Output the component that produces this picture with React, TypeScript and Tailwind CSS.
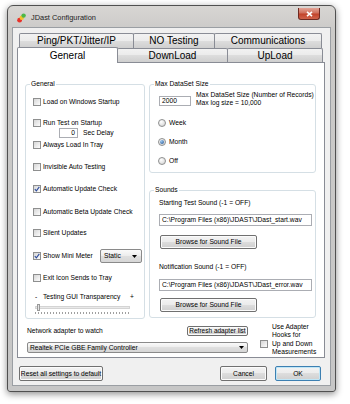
import type { ReactNode } from 'react';

function Check({ checked }: { checked?: boolean }) {
  return (
    <span className="w-[8px] h-[8px] shrink-0 border border-[#8e8f8f] bg-[linear-gradient(135deg,#d6d6d6,#fdfdfd)] flex items-center justify-center">
      {checked && (
        <svg width="6" height="6" viewBox="0 0 6 6">
          <path d="M0.8 3.1 L2.4 4.9 L5.3 0.9" fill="none" stroke="#2d4c9c" strokeWidth="1.1" />
        </svg>
      )}
    </span>
  );
}

function Radio({ on }: { on?: boolean }) {
  return (
    <span className="w-[8px] h-[8px] shrink-0 rounded-full border border-[#8e8f8f] bg-[radial-gradient(circle_at_35%_30%,#ffffff,#cfcfcf)] flex items-center justify-center">
      {on && <span className="w-[4px] h-[4px] rounded-full bg-[radial-gradient(circle_at_35%_30%,#9cc8f0,#1f4f8f)]" />}
    </span>
  );
}

function Btn({ children, className = '', ok }: { children: ReactNode; className?: string; ok?: boolean }) {
  return (
    <div
      className={`flex items-center justify-center whitespace-nowrap rounded-[2px] border bg-[linear-gradient(#f3f3f3,#ebebeb_50%,#dddddd_50%,#cfcfcf)] ${
        ok ? 'border-[#3c7fb1] shadow-[inset_0_0_0_1px_#bfe6f7]' : 'border-[#707070] shadow-[inset_0_0_0_1px_#fbfbfb]'
      } ${className}`}
    >
      {children}
    </div>
  );
}

function Arrow() {
  return (
    <svg width="5" height="3" viewBox="0 0 5 3" className="shrink-0">
      <polygon points="0,0 5,0 2.5,3" fill="#000" />
    </svg>
  );
}

function CheckRow({ label, checked, className = '' }: { label: string; checked?: boolean; className?: string }) {
  return (
    <div className={`flex items-center h-[10px] ${className}`}>
      <Check checked={checked} />
      <span className="ml-[2px] whitespace-nowrap">{label}</span>
    </div>
  );
}

function RadioRow({ label, on, className = '' }: { label: string; on?: boolean; className?: string }) {
  return (
    <div className={`flex items-center h-[10px] pl-[8px] ${className}`}>
      <Radio on={on} />
      <span className="ml-[3px]">{label}</span>
    </div>
  );
}

function Tab({ label, className = '' }: { label: string; className?: string }) {
  return (
    <div
      className={`flex items-center justify-center border border-b-0 border-[#898c95] rounded-t-[2px] bg-[linear-gradient(#f2f2f2,#ebebeb_50%,#dddddd_50%,#cfcfcf)] text-[10px] ${className}`}
    >
      {label}
    </div>
  );
}

export default function App() {
  return (
    <div className="min-h-[404px] bg-white pt-[5px] pl-[7px] font-['Liberation_Sans',Arial,sans-serif] text-black text-[6.7px] leading-[8px]">
      <div className="w-[329px] h-[387px] rounded-t-[6px] rounded-b-[3px] border border-[#505050] bg-[linear-gradient(#d8d6d3,#cbcac8_24px,#c6c6c6)] shadow-[0_2px_7px_rgba(0,0,0,0.45)] px-[4px] pb-[5px] flex flex-col">
        {/* title bar */}
        <div className="h-[21px] shrink-0 flex items-start">
          <svg width="9" height="10" viewBox="0 0 9 10" className="ml-[5px] mt-[7px]">
            <circle cx="2.6" cy="7.2" r="2.4" fill="#e8322a" />
            <circle cx="4.8" cy="4.8" r="2.2" fill="#f2c12e" />
            <circle cx="6.6" cy="2.6" r="2.2" fill="#4cb848" />
          </svg>
          <span className="ml-[5px] mt-[7px] text-[7.4px] leading-[9px] text-[#222]">JDast Configuration</span>
          <div className="ml-auto mr-[11px] mt-[2px] w-[22px] h-[12px] rounded-b-[3px] border border-t-0 border-[#6e2a22] bg-[linear-gradient(#e3a496,#d0705c_45%,#c2432b_55%,#d0634a)] flex items-center justify-center">
            <svg width="7" height="6" viewBox="0 0 7 6">
              <path d="M1 0.8 L6 5.2 M6 0.8 L1 5.2" stroke="#fff" strokeWidth="1.6" />
            </svg>
          </div>
        </div>

        {/* client */}
        <div className="flex-1 border border-[#9a9ea3] bg-[#f0f0f0] flex flex-col pt-[5px]">
          <div className="ml-[4px] flex flex-col">
            <div className="flex ml-[2px]">
              <Tab label="Ping/PKT/Jitter/IP" className="w-[115px] h-[15px]" />
              <Tab label="NO Testing" className="w-[82px] h-[15px] -ml-px" />
              <Tab label="Communications" className="w-[108px] h-[15px] -ml-px" />
            </div>
            <div className="flex items-end -mt-px">
              <div className="relative z-10 w-[101px] h-[16px] -mb-px border border-b-0 border-[#898c95] rounded-t-[2px] bg-white flex items-center justify-center text-[10px]">
                General
              </div>
              <Tab label="DownLoad" className="w-[111px] h-[14px] -ml-px" />
              <Tab label="UpLoad" className="w-[96px] h-[14px] -ml-px" />
            </div>

            {/* panel */}
            <div className="w-[308px] h-[296px] border border-[#898c95] bg-white pt-[17px] pl-[7px]">
              <div className="flex">
                <fieldset className="w-[120px] h-[239px] border border-[#d5dfe5] rounded-[3px]">
                  <legend className="ml-[4px] px-[1px] leading-[8px]">General</legend>
                  <div className="pl-[7px] flex flex-col">
                    <CheckRow label="Load on Windows Startup" className="mt-[9px]" />
                    <CheckRow label="Run Test on Startup" className="mt-[11px]" />
                    <div className="flex items-center h-[10px] pl-[26px]">
                      <div className="w-[19px] h-[10px] border border-[#abadb3] bg-white text-right pr-[2px] leading-[8px]">0</div>
                      <span className="ml-[5px]">Sec Delay</span>
                    </div>
                    <CheckRow label="Always Load In Tray" className="mt-[2px]" />
                    <CheckRow label="Invisible Auto Testing" className="mt-[12px]" />
                    <CheckRow label="Automatic Update Check" checked className="mt-[12px]" />
                    <CheckRow label="Automatic Beta Update Check" className="mt-[13px]" />
                    <CheckRow label="Silent Updates" className="mt-[11px]" />
                    <div className="flex items-center h-[14px] mt-[11px]">
                      <Check checked />
                      <span className="ml-[2px]">Show Mini Meter</span>
                      <div className="ml-auto mr-[2px] w-[42px] h-[14px] border border-[#8a8a8a] rounded-[2px] bg-[linear-gradient(#fafafa,#ececec_50%,#dfdfdf_50%,#d6d6d6)] flex items-center pl-[3px] pr-[4px]">
                        <span>Static</span>
                        <span className="ml-auto"><Arrow /></span>
                      </div>
                    </div>
                    <CheckRow label="Exit Icon Sends to Tray" className="mt-[10px]" />
                    <div className="flex items-center h-[10px] mt-[9px] pl-[2px] pr-[10px]">
                      <span className="w-[8px]">-</span>
                      <span>Testing GUI Transparency</span>
                      <span className="ml-auto">+</span>
                    </div>
                    <div className="ml-[2px] mt-[2px] w-[95px] h-[12px] flex flex-col">
                      <div className="relative mt-[2px] h-[3px] border border-[#d4d4d4] bg-[#e9e9e9]">
                        <div className="absolute left-[1px] -top-[3px] w-[3px] h-[7px] border border-[#9a9a9a] bg-[#e4e4e4]" />
                      </div>
                      <div className="mt-[3px] h-[2px] w-full bg-[repeating-linear-gradient(90deg,#a0a0a0_0_1px,transparent_1px_3px)]" />
                    </div>
                  </div>
                </fieldset>

                <div className="ml-[4px] w-[167px] flex flex-col">
                  <fieldset className="h-[93px] border border-[#d5dfe5] rounded-[3px]">
                    <legend className="ml-[4px] px-[1px] leading-[8px]">Max DataSet Size</legend>
                    <div className="flex flex-col">
                      <div className="flex items-start mt-[3px] pl-[9px]">
                        <div className="mt-[5px] w-[32px] h-[10px] border border-[#abadb3] bg-white pl-[2px] leading-[8px]">2000</div>
                        <div className="ml-[5px] leading-[8px]">
                          Max DataSet Size (Number of Records)
                          <br />
                          Max log size = 10,000
                        </div>
                      </div>
                      <RadioRow label="Week" className="mt-[11px]" />
                      <RadioRow label="Month" on className="mt-[9px]" />
                      <RadioRow label="Off" className="mt-[9px]" />
                    </div>
                  </fieldset>

                  <fieldset className="mt-[13px] h-[132px] border border-[#d5dfe5] rounded-[3px]">
                    <legend className="ml-[4px] px-[1px] leading-[8px]">Sounds</legend>
                    <div className="flex flex-col pl-[9px]">
                      <div className="mt-[5px] h-[8px]">Starting Test Sound (-1 = OFF)</div>
                      <div className="mt-[7px] w-[153px] h-[12px] border border-[#abadb3] bg-white pl-[2px] flex items-center whitespace-nowrap overflow-hidden">
                        {'C:\\Program Files (x86)\\JDAST\\JDast_start.wav'}
                      </div>
                      <Btn className="mt-[9px] ml-[1px] w-[97px] h-[14px]">Browse for Sound File</Btn>
                      <div className="mt-[14px] h-[8px]">Notification Sound (-1 = OFF)</div>
                      <div className="mt-[8px] w-[153px] h-[12px] border border-[#abadb3] bg-white pl-[2px] flex items-center whitespace-nowrap overflow-hidden">
                        {'C:\\Program Files (x86)\\JDAST\\JDast_error.wav'}
                      </div>
                      <Btn className="mt-[7px] ml-[1px] w-[97px] h-[14px]">Browse for Sound File</Btn>
                    </div>
                  </fieldset>
                </div>
              </div>

              {/* network adapter */}
              <div className="flex mt-[4px] pl-[2px]">
                <div className="w-[221px] pt-[3px] flex flex-col">
                  <div className="flex items-center justify-between h-[10px]">
                    <span>Network adapter to watch</span>
                    <Btn className="w-[61px] h-[10px] text-[6.5px]">Refresh adapter list</Btn>
                  </div>
                  <div className="mt-[6px] h-[11px] border border-[#8a8a8a] rounded-[2px] bg-[linear-gradient(#fafafa,#ececec_50%,#dfdfdf_50%,#d6d6d6)] flex items-center pl-[2px] pr-[3px]">
                    <span>Realtek PCIe GBE Family Controller</span>
                    <span className="ml-auto"><Arrow /></span>
                  </div>
                </div>
                <div className="ml-[12px] mt-[17px]">
                  <Check />
                </div>
                <div className="ml-[4px] leading-[8.4px] whitespace-nowrap">
                  Use Adapter
                  <br />
                  Hooks for
                  <br />
                  Up and Down
                  <br />
                  Measurements
                </div>
              </div>
            </div>
          </div>

          {/* bottom buttons */}
          <div className="flex items-center mt-[8px] h-[15px]">
            <Btn className="ml-[6px] w-[84px] h-[15px]">Reset all settings to default</Btn>
            <Btn className="ml-auto w-[47px] h-[15px]">Cancel</Btn>
            <Btn ok className="ml-[8px] mr-[9px] w-[46px] h-[15px]">OK</Btn>
          </div>
        </div>
      </div>
    </div>
  );
}
